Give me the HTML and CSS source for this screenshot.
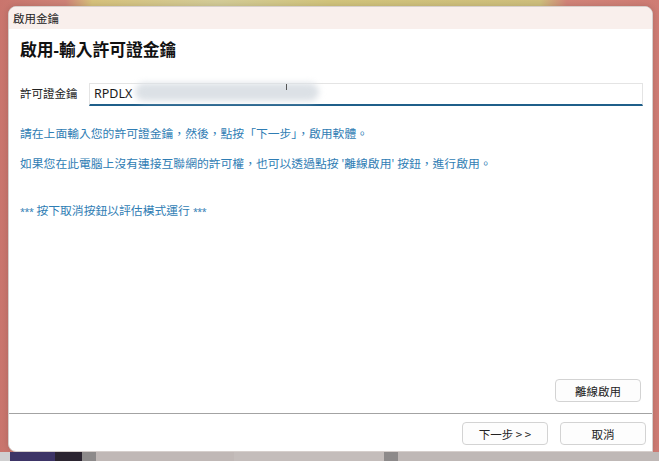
FILE: index.html
```html
<!DOCTYPE html>
<html lang="zh-Hant">
  <head>
    <meta charset="UTF-8" />
    <meta name="viewport" content="width=device-width, initial-scale=1.0" />
    <title>啟用金鑰</title>

    <link rel="stylesheet" href="styles.css">
  </head>
  <body>
    <div class="dialog">
      <div class="titlebar">啟用金鑰</div>

      <div class="content">
        <h1>啟用-輸入許可證金鑰</h1>

        <div class="key-row">
          <label for="licenseKey">許可證金鑰</label>
          <div class="key-field">
            <input type="text" id="licenseKey" name="licenseKey" value="RPDLX" />
            <span class="key-mask"></span>
            <span class="key-caret"></span>
          </div>
        </div>

        <p class="hint">請在上面輸入您的許可證金鑰，然後，點按「下一步」，啟用軟體。</p>
        <p class="hint">如果您在此電腦上沒有連接互聯網的許可權，也可以透過點按 '離線啟用' 按鈕，進行啟用。</p>
        <p class="hint trial"><span class="stars">***</span> 按下取消按鈕以評估模式運行 <span class="stars">***</span></p>

        <button type="button" class="btn offline">離線啟用</button>
      </div>

      <div class="footer">
        <button type="button" class="btn">下一步 &gt; &gt;</button>
        <button type="button" class="btn">取消</button>
      </div>
    </div>

    <div class="taskbar">
      <span class="tile t1"></span>
      <span class="tile t2"></span>
      <span class="tile t3"></span>
      <span class="tile t4"></span>
      <span class="tile t5"></span>
      <span class="tile t6"></span>
      <span class="tile t4"></span>
      <span class="tile t7"></span>
    </div>
  </body>
</html>
```

FILE: styles.css
```css
html,
body {
  height: 100%;
}

body {
  margin: 0;
  display: flex;
  flex-direction: column;
  overflow: hidden;
  font-family: "Noto Sans", "Noto Sans CJK TC", sans-serif;
  background: linear-gradient(
    90deg,
    #c9756d 0%,
    #cf8378 10%,
    #d7c27c 14%,
    #d4cc98 33%,
    #d2c47c 50%,
    #cfbf7d 82%,
    #d28479 86%,
    #cf7c74 100%
  );
}

.dialog {
  height: 446px;
  margin: 6px 6px 0 8px;
  display: flex;
  flex-direction: column;
  background: white;
  border: 1px solid #d6cfcc;
  border-radius: 8px 8px 0 8px;
  box-shadow: 0 0 6px rgba(0, 0, 0, 0.15);
  overflow: hidden;
  box-sizing: border-box;
}

.titlebar {
  height: 22px;
  padding-left: 4px;
  display: flex;
  align-items: center;
  font-size: 11.5px;
  color: #222;
  background: #f9efec;
}

.content {
  flex: 1;
  display: flex;
  flex-direction: column;
  padding: 10px 9px 11px 11px;
}

h1 {
  margin: 0;
  font-size: 16.8px;
  line-height: 22px;
  font-weight: 700;
  color: #111;
}

.key-row {
  display: flex;
  align-items: center;
  margin-top: 20px;
}

.key-row label {
  width: 69px;
  font-size: 11.5px;
  color: #222;
}

.key-field {
  flex: 1;
  position: relative;
}

.key-field input {
  width: 100%;
  height: 23px;
  box-sizing: border-box;
  padding: 0 4px;
  font-family: "Noto Sans", sans-serif;
  font-size: 12.5px;
  color: #1a1a1a;
  border: 1px solid #e4e4e4;
  border-bottom: 2px solid #1f5f8a;
  outline: none;
}

.key-mask {
  position: absolute;
  left: 46px;
  top: 2px;
  width: 184px;
  height: 18px;
  border-radius: 9px;
  background: #dce1e6;
  filter: blur(3px);
}

.key-caret {
  position: absolute;
  left: 197px;
  top: 3px;
  width: 1px;
  height: 6px;
  background: #555;
}

.hint {
  margin: 0;
  font-size: 11.8px;
  line-height: 16px;
  color: #2f7db4;
}

.hint:first-of-type {
  margin-top: 19px;
}

.hint + .hint {
  margin-top: 14px;
}

.hint.trial {
  margin-top: 31px;
}

.stars {
  font-size: 9px;
  letter-spacing: -0.5px;
}

.btn {
  width: 86px;
  height: 23px;
  padding: 0;
  font-family: "Noto Sans CJK TC", sans-serif;
  font-size: 11.5px;
  color: #222;
  background: #fdfdfd;
  border: 1px solid #d3d3d3;
  border-radius: 4px;
}

.offline {
  margin: auto 2px 0 0;
  align-self: flex-end;
}

.footer {
  display: flex;
  justify-content: flex-end;
  gap: 12px;
  padding: 8px 6px 6px 0;
  border-top: 1px solid #a3a3a3;
}

.taskbar {
  flex: 1;
  display: flex;
}

.tile {
  height: 100%;
}

.t1 {
  width: 10px;
  background: #cfcfd0;
}

.t2 {
  width: 45px;
  background: #3d3466;
}

.t3 {
  width: 27px;
  background: #2b2430;
}

.t4 {
  width: 14px;
  background: #8d8a8a;
}

.t5 {
  width: 138px;
  background: #c0b8b6;
}

.t6 {
  width: 150px;
  background: #c4bdbb;
}

.t7 {
  flex: 1;
  background: #bfb8b6;
}
```
